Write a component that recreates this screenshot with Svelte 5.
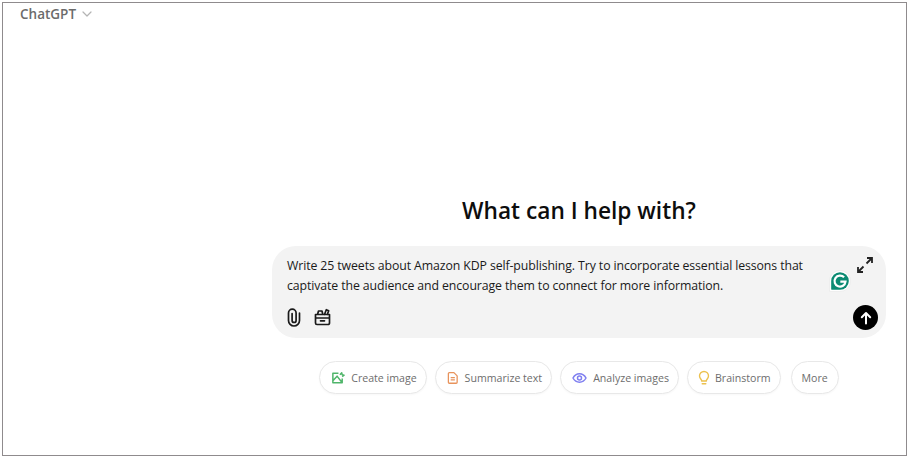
<script lang="ts">
  const chips = [
    { label: "Create image", kind: "image" },
    { label: "Summarize text", kind: "doc" },
    { label: "Analyze images", kind: "eye" },
    { label: "Brainstorm", kind: "bulb" },
    { label: "More", kind: "" }
  ];
</script>

<div class="frame">
  <header class="topbar">
    <span class="model">ChatGPT</span>
    <svg class="caret" width="12" height="12" viewBox="0 0 12 12" fill="none" stroke="#b4b4b4" stroke-width="1.2" stroke-linecap="round" stroke-linejoin="round"><path d="M2 4l4 4 4-4" /></svg>
  </header>

  <main class="content">
    <h1>What can I help with?</h1>

    <div class="composer">
      <div class="textrow">
        <p class="prompt">Write 25 tweets about Amazon KDP self-publishing. Try to incorporate essential lessons that captivate the audience and encourage them to connect for more information.</p>
        <div class="side">
          <svg class="expand" width="18" height="18" viewBox="0 0 18 18" fill="none" stroke="#222" stroke-width="1.8"><path d="M10.5 7.5L16 2M11 2h5v5M7.5 10.5L2 16M2 11v5h5" /></svg>
          <span class="grammarly">
            <svg width="22" height="22" viewBox="0 0 20 20"><path d="M10 .5a9.500 9.500 0 1 1 0 19H1.500a1 1 0 0 1-1-1V10A9.500 9.500 0 0 1 10 .5z" fill="#fff" stroke="#e4e4e4" stroke-width=".5" /><path d="M10 2a8 8 0 1 1 0 16H2.800a.8.8 0 0 1-.8-.8V10A8 8 0 0 1 10 2z" fill="#0b8a72" /><path d="M13.700 6.700A5 5 0 1 0 15 10.600H10.300" fill="none" stroke="#fff" stroke-width="2" /></svg>
          </span>
        </div>
      </div>
      <div class="actions">
        <div class="tools">
          <svg width="16" height="20" viewBox="0 0 16 20" fill="none" stroke="#1a1a1a" stroke-width="1.7" stroke-linecap="round"><path d="M13.500 6v7.500a5.500 5.500 0 0 1-11 0V6a3.800 3.800 0 0 1 7.600 0v7.500a2 2 0 0 1-4 0V6.500" /></svg>
          <svg width="17" height="18" viewBox="0 0 17 18" fill="none" stroke="#1a1a1a" stroke-width="1.7" stroke-linecap="round" stroke-linejoin="round"><path d="M1.500 6.500h14v8.500a1.500 1.500 0 0 1-1.500 1.500H3A1.500 1.500 0 0 1 1.500 15zM1.500 10h14M6.500 12.800h4M3.500 6.500l1-3.500h3.500l.8 3.500M10.500 6.500l1.800-4.800 2.400 1-1.400 3.800" /></svg>
        </div>
        <button class="send" aria-label="Send">
          <svg width="14" height="14" viewBox="0 0 14 14" fill="none" stroke="#fff" stroke-width="2" stroke-linecap="round" stroke-linejoin="round"><path d="M7 12.500V2M2.800 6.200L7 2l4.200 4.200" /></svg>
        </button>
      </div>
    </div>

    <div class="chips">
      {#each chips as chip}
        <button class="chip">
          {#if chip.kind === "image"}
            <svg width="14" height="14" viewBox="0 0 15 14" fill="none" stroke="#4fb56a" stroke-width="1.6" stroke-linejoin="round"><path d="M8 2H2v10h10V7.500M2 10l4.500-5 5.500 7M9.500 3.500l2-2 .5 2 2 .5-2 1.500" /></svg>
          {:else if chip.kind === "doc"}
            <svg width="12" height="14" viewBox="0 0 13 14" fill="none" stroke="#e8935c" stroke-width="1.4" stroke-linejoin="round"><path d="M1.500 2.200a1 1 0 0 1 1-1h5l3.500 3.500v7a1 1 0 0 1-1 1h-7.500a1 1 0 0 1-1-1zM4 6.500h4.500M4 9h4.500" /></svg>
          {:else if chip.kind === "eye"}
            <svg width="15" height="14" viewBox="0 0 15 14" fill="none" stroke="#7f7ff0" stroke-width="1.5"><path d="M1 7c1.500-2.800 3.700-4.200 6.500-4.200S12.500 4.200 14 7c-1.500 2.800-3.700 4.200-6.500 4.200S2.500 9.800 1 7z" /><circle cx="7.500" cy="7" r="2" /></svg>
          {:else if chip.kind === "bulb"}
            <svg class="bulb" width="14" height="16" viewBox="0 0 14 16" fill="none" stroke="#ecc14e" stroke-width="1.400" stroke-linecap="round"><path d="M4.800 11c0-1.400-2.300-2.400-2.300-5a4.500 4.500 0 0 1 9 0c0 2.600-2.300 3.600-2.300 5zM5.200 13.800h3.600" /></svg>
          {/if}
          <span>{chip.label}</span>
        </button>
      {/each}
    </div>
  </main>
</div>

<style>
  :global(body) {
    margin: 0;
    background: #fff;
  }

  .frame {
    box-sizing: border-box;
    width: 905px;
    height: 454px;
    margin: 2px 0 0 2px;
    border: 1px solid #8f8b8d;
    font-family: "Open Sans", "Noto Sans", sans-serif;
    color: #0d0d0d;
  }

  .topbar {
    display: flex;
    align-items: center;
    gap: 5px;
    padding: 1px 0 0 17px;
    height: 20px;
  }

  .model {
    font-size: 13.5px;
    font-weight: 600;
    color: #6b6b6b;
  }

  .content {
    display: flex;
    flex-direction: column;
    margin: 0 20px 0 269px;
  }

  h1 {
    margin: 171px 0 0;
    text-align: center;
    font-size: 22.7px;
    line-height: 32px;
    font-weight: 600;
    color: #0d0d0d;
  }

  .composer {
    box-sizing: border-box;
    height: 92px;
    margin-top: 19px;
    padding: 10px 8px 8px 14px;
    border-radius: 24px;
    background: #f3f3f3;
  }

  .textrow {
    display: flex;
    justify-content: space-between;
    height: 49px;
  }

  .prompt {
    width: 530px;
    margin: 0 0 0 1px;
    font-size: 12.3px;
    letter-spacing: -0.1px;
    line-height: 20px;
    color: #1a1a1a;
  }

  .side {
    display: flex;
    flex-direction: column;
    align-items: flex-end;
    width: 36px;
  }

  .expand {
    margin-right: 4px;
  }

  .grammarly {
    display: flex;
    align-self: flex-start;
    margin-top: -4px;
    margin-left: -13px;
  }

  .actions {
    display: flex;
    align-items: center;
    justify-content: space-between;
  }

  .tools {
    display: flex;
    align-items: center;
    gap: 12px;
    margin-top: -1px;
  }

  .send {
    display: flex;
    align-items: center;
    justify-content: center;
    width: 25px;
    height: 25px;
    padding: 0;
    border: none;
    border-radius: 50%;
    background: #000;
  }

  .chips {
    display: flex;
    justify-content: center;
    gap: 8px;
    margin-top: 23px;
  }

  .chip {
    display: flex;
    align-items: center;
    gap: 6px;
    height: 33px;
    box-sizing: border-box;
    padding: 0 9px 0 11px;
    border: 1px solid #e8e8e8;
    border-radius: 17px;
    background: #fff;
    box-shadow: 0 1px 2px rgba(0, 0, 0, 0.03);
    font-family: inherit;
    font-size: 10.6px;
    color: #6d6d6d;
  }

  .chip:last-child {
    margin-left: 2px;
    padding: 0 10px;
  }

  .bulb {
    margin: 0 -2px;
  }
</style>
